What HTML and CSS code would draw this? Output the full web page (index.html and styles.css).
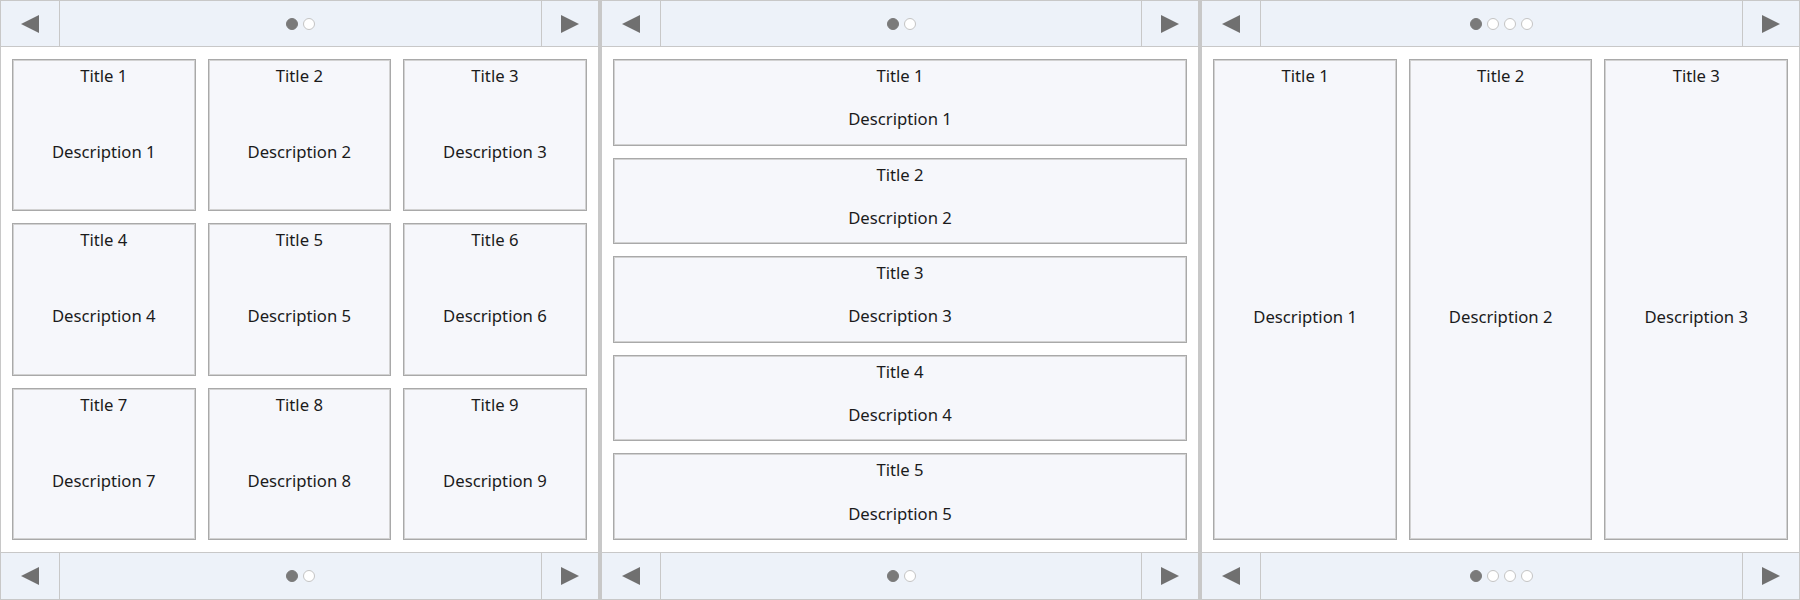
FILE: index.html
```html
<!doctype html>
<html lang="en">
  <head>
    <meta charset="UTF-8" />
    <meta name="viewport" content="width=device-width, initial-scale=1.0" />
    <title>Pagers</title>
    <link rel="stylesheet" href="styles.css">
  </head>
  <body>
    <div class="deck">
      <!-- 3x3 grid pager -->
      <section class="pager">
        <div class="pager-bar">
          <button class="nav-btn prev" aria-label="Previous">
            <svg width="18" height="18" viewBox="0 0 18 18"><polygon points="18,0 18,18 0,9" /></svg>
          </button>
          <div class="dots"><span class="dot active"></span><span class="dot"></span></div>
          <button class="nav-btn next" aria-label="Next">
            <svg width="18" height="18" viewBox="0 0 18 18"><polygon points="0,0 0,18 18,9" /></svg>
          </button>
        </div>
        <div class="pager-body layout-grid">
          <div class="card"><div class="card-title">Title 1</div><div class="card-desc">Description 1</div></div>
          <div class="card"><div class="card-title">Title 2</div><div class="card-desc">Description 2</div></div>
          <div class="card"><div class="card-title">Title 3</div><div class="card-desc">Description 3</div></div>
          <div class="card"><div class="card-title">Title 4</div><div class="card-desc">Description 4</div></div>
          <div class="card"><div class="card-title">Title 5</div><div class="card-desc">Description 5</div></div>
          <div class="card"><div class="card-title">Title 6</div><div class="card-desc">Description 6</div></div>
          <div class="card"><div class="card-title">Title 7</div><div class="card-desc">Description 7</div></div>
          <div class="card"><div class="card-title">Title 8</div><div class="card-desc">Description 8</div></div>
          <div class="card"><div class="card-title">Title 9</div><div class="card-desc">Description 9</div></div>
        </div>
        <div class="pager-bar bottom">
          <button class="nav-btn prev" aria-label="Previous">
            <svg width="18" height="18" viewBox="0 0 18 18"><polygon points="18,0 18,18 0,9" /></svg>
          </button>
          <div class="dots"><span class="dot active"></span><span class="dot"></span></div>
          <button class="nav-btn next" aria-label="Next">
            <svg width="18" height="18" viewBox="0 0 18 18"><polygon points="0,0 0,18 18,9" /></svg>
          </button>
        </div>
      </section>

      <!-- stacked rows pager -->
      <section class="pager">
        <div class="pager-bar">
          <button class="nav-btn prev" aria-label="Previous">
            <svg width="18" height="18" viewBox="0 0 18 18"><polygon points="18,0 18,18 0,9" /></svg>
          </button>
          <div class="dots"><span class="dot active"></span><span class="dot"></span></div>
          <button class="nav-btn next" aria-label="Next">
            <svg width="18" height="18" viewBox="0 0 18 18"><polygon points="0,0 0,18 18,9" /></svg>
          </button>
        </div>
        <div class="pager-body layout-rows">
          <div class="card"><div class="card-title">Title 1</div><div class="card-desc">Description 1</div></div>
          <div class="card"><div class="card-title">Title 2</div><div class="card-desc">Description 2</div></div>
          <div class="card"><div class="card-title">Title 3</div><div class="card-desc">Description 3</div></div>
          <div class="card"><div class="card-title">Title 4</div><div class="card-desc">Description 4</div></div>
          <div class="card"><div class="card-title">Title 5</div><div class="card-desc">Description 5</div></div>
        </div>
        <div class="pager-bar bottom">
          <button class="nav-btn prev" aria-label="Previous">
            <svg width="18" height="18" viewBox="0 0 18 18"><polygon points="18,0 18,18 0,9" /></svg>
          </button>
          <div class="dots"><span class="dot active"></span><span class="dot"></span></div>
          <button class="nav-btn next" aria-label="Next">
            <svg width="18" height="18" viewBox="0 0 18 18"><polygon points="0,0 0,18 18,9" /></svg>
          </button>
        </div>
      </section>

      <!-- tall columns pager -->
      <section class="pager">
        <div class="pager-bar">
          <button class="nav-btn prev" aria-label="Previous">
            <svg width="18" height="18" viewBox="0 0 18 18"><polygon points="18,0 18,18 0,9" /></svg>
          </button>
          <div class="dots">
            <span class="dot active"></span><span class="dot"></span><span class="dot"></span><span class="dot"></span>
          </div>
          <button class="nav-btn next" aria-label="Next">
            <svg width="18" height="18" viewBox="0 0 18 18"><polygon points="0,0 0,18 18,9" /></svg>
          </button>
        </div>
        <div class="pager-body layout-columns">
          <div class="card"><div class="card-title">Title 1</div><div class="card-desc">Description 1</div></div>
          <div class="card"><div class="card-title">Title 2</div><div class="card-desc">Description 2</div></div>
          <div class="card"><div class="card-title">Title 3</div><div class="card-desc">Description 3</div></div>
        </div>
        <div class="pager-bar bottom">
          <button class="nav-btn prev" aria-label="Previous">
            <svg width="18" height="18" viewBox="0 0 18 18"><polygon points="18,0 18,18 0,9" /></svg>
          </button>
          <div class="dots">
            <span class="dot active"></span><span class="dot"></span><span class="dot"></span><span class="dot"></span>
          </div>
          <button class="nav-btn next" aria-label="Next">
            <svg width="18" height="18" viewBox="0 0 18 18"><polygon points="0,0 0,18 18,9" /></svg>
          </button>
        </div>
      </section>
    </div>
  </body>
</html>
```

FILE: styles.css
```css
* {
  margin: 0;
  padding: 0;
  box-sizing: border-box;
}

body {
  font-family: "Noto Sans", "Open Sans", sans-serif;
  font-size: 16.7px;
  color: #1b1b1b;
  background: #fff;
}

.deck {
  display: flex;
  gap: 2px;
  height: 600px;
  background: #c8c8c8;
}

.pager {
  flex: 1;
  display: flex;
  flex-direction: column;
  border: 1px solid #c8c8c8;
  background: #fff;
  min-width: 0;
}

/* top / bottom navigation bar */
.pager-bar {
  display: flex;
  height: 46px;
  flex: none;
  background: #edf2f9;
  border-bottom: 1px solid #c8c8c8;
}

.pager-bar.bottom {
  height: 47px;
  border-bottom: none;
  border-top: 1px solid #c8c8c8;
}

.nav-btn {
  width: 59px;
  flex: none;
  display: flex;
  align-items: center;
  justify-content: center;
  background: transparent;
  border: none;
  cursor: pointer;
}

.nav-btn.prev {
  border-right: 1px solid #c8c8c8;
}

.nav-btn.next {
  width: 57px;
  border-left: 1px solid #c8c8c8;
}

.nav-btn svg {
  fill: #707070;
}

.dots {
  flex: 1;
  display: flex;
  align-items: center;
  justify-content: center;
  gap: 5px;
}

.dot {
  width: 12px;
  height: 12px;
  border-radius: 50%;
  background: #fff;
  border: 1px solid #c4c4c4;
}

.dot.active {
  background: #7a7a7a;
  border-color: #7a7a7a;
}

/* content area */
.pager-body {
  flex: 1;
  padding: 12px 11px;
  gap: 12px;
  min-height: 0;
}

.layout-grid {
  display: grid;
  grid-template-columns: repeat(3, 1fr);
  grid-template-rows: repeat(3, 1fr);
}

.layout-rows {
  display: grid;
  grid-template-rows: repeat(5, 1fr);
}

.layout-columns {
  display: grid;
  grid-template-columns: repeat(3, 1fr);
}

.card {
  display: flex;
  flex-direction: column;
  background: #f6f7fb;
  border: 1px solid #a9a9a9;
  box-shadow: inset 0 0 0 1px #d2d2d2;
  text-align: center;
  min-width: 0;
}

.card-title {
  height: 32px;
  padding-top: 4px;
  flex: none;
}

.card-desc {
  flex: 1;
  display: flex;
  align-items: center;
  justify-content: center;
  padding-top: 1px;
}
```
